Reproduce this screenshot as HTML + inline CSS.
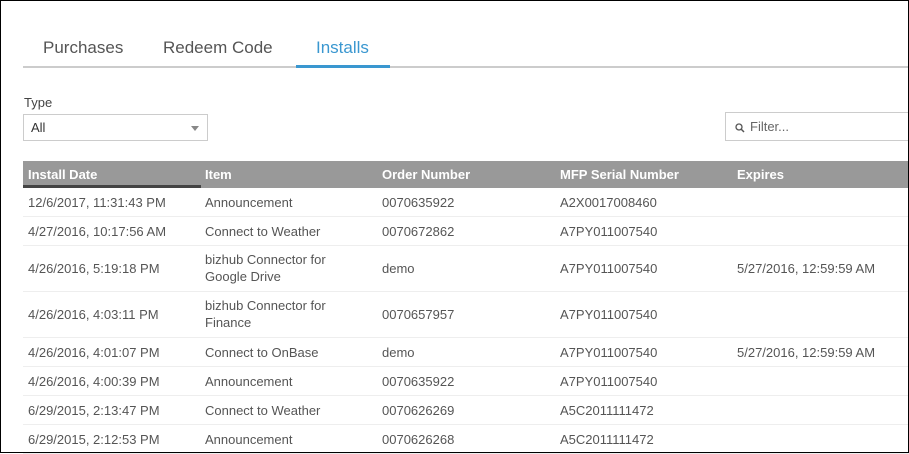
<!DOCTYPE html>
<html><head><style>
*{margin:0;padding:0;box-sizing:border-box}
body{width:909px;height:453px;overflow:hidden;background:#fff;font-family:"Liberation Sans",sans-serif;color:#555;position:relative}
.frame{position:absolute;left:0;top:0;width:909px;height:453px;border:1px solid #000;pointer-events:none;z-index:9}
.tab{position:absolute;top:38px;font-size:17px;color:#555}
.tabline{position:absolute;left:23px;top:66px;width:886px;height:2px;background:#ccc}
.active{position:absolute;left:296px;top:65px;width:94px;height:3px;background:#3a97d0}
.lbl{position:absolute;left:24px;top:95px;font-size:13px;color:#444}
.sel{position:absolute;left:23px;top:114px;width:185px;height:27px;border:1px solid #ccc;font-size:13px;padding:5px 7px;color:#333}
.sel:after{content:"";position:absolute;right:8px;top:11px;border:4px solid transparent;border-top:5px solid #888}
.filter{position:absolute;left:725px;top:112px;width:190px;height:29px;border:1px solid #ccc;font-size:13px;padding:6px 8px 0 24px;color:#666}
.hdr{position:absolute;left:23px;top:161px;width:886px;height:27px;background:#999;color:#fff;font-weight:bold;font-size:13px}
.hdr span,.row span{position:absolute;top:6px}
.uline{position:absolute;left:23px;top:185px;width:178px;height:3px;background:#444}
.row{position:absolute;left:23px;width:886px;border-bottom:1px solid #eee;font-size:13px}
.row span{line-height:17px}
</style></head><body>
<div class="frame"></div>
<div class="tab" style="left:43px">Purchases</div>
<div class="tab" style="left:163px">Redeem Code</div>
<div class="tab" style="left:316px;color:#3a97d0">Installs</div>
<div class="tabline"></div><div class="active"></div>
<div class="lbl">Type</div>
<div class="sel">All</div>
<div class="filter"><svg style="position:absolute;left:9px;top:10px" width="10" height="10" viewBox="0 0 10 10"><circle cx="4" cy="4" r="3" fill="none" stroke="#555" stroke-width="1.3"/><path d="M6 6l3 3" stroke="#555" stroke-width="1.5"/></svg>Filter...</div>
<div class="hdr"><span style="left:5px">Install Date</span><span style="left:182px">Item</span><span style="left:359px">Order Number</span><span style="left:537px">MFP Serial Number</span><span style="left:714px">Expires</span></div>
<div class="uline"></div>
<div class="row" style="top:188px;height:29px"><span style="left:5px">12/6/2017, 11:31:43 PM</span><span style="left:182px">Announcement</span><span style="left:359px">0070635922</span><span style="left:537px">A2X0017008460</span></div>
<div class="row" style="top:217px;height:29px"><span style="left:5px">4/27/2016, 10:17:56 AM</span><span style="left:182px">Connect to Weather</span><span style="left:359px">0070672862</span><span style="left:537px">A7PY011007540</span></div>
<div class="row" style="top:246px;height:46px"><span style="left:5px;top:14px">4/26/2016, 5:19:18 PM</span><span style="left:182px;top:5px">bizhub Connector for<br>Google Drive</span><span style="left:359px;top:14px">demo</span><span style="left:537px;top:14px">A7PY011007540</span><span style="left:714px;top:14px">5/27/2016, 12:59:59 AM</span></div>
<div class="row" style="top:292px;height:46px"><span style="left:5px;top:14px">4/26/2016, 4:03:11 PM</span><span style="left:182px;top:5px">bizhub Connector for<br>Finance</span><span style="left:359px;top:14px">0070657957</span><span style="left:537px;top:14px">A7PY011007540</span></div>
<div class="row" style="top:338px;height:29px"><span style="left:5px">4/26/2016, 4:01:07 PM</span><span style="left:182px">Connect to OnBase</span><span style="left:359px">demo</span><span style="left:537px">A7PY011007540</span><span style="left:714px">5/27/2016, 12:59:59 AM</span></div>
<div class="row" style="top:367px;height:29px"><span style="left:5px">4/26/2016, 4:00:39 PM</span><span style="left:182px">Announcement</span><span style="left:359px">0070635922</span><span style="left:537px">A7PY011007540</span></div>
<div class="row" style="top:396px;height:29px"><span style="left:5px">6/29/2015, 2:13:47 PM</span><span style="left:182px">Connect to Weather</span><span style="left:359px">0070626269</span><span style="left:537px">A5C2011111472</span></div>
<div class="row" style="top:425px;height:29px"><span style="left:5px">6/29/2015, 2:12:53 PM</span><span style="left:182px">Announcement</span><span style="left:359px">0070626268</span><span style="left:537px">A5C2011111472</span></div>
</body></html>
